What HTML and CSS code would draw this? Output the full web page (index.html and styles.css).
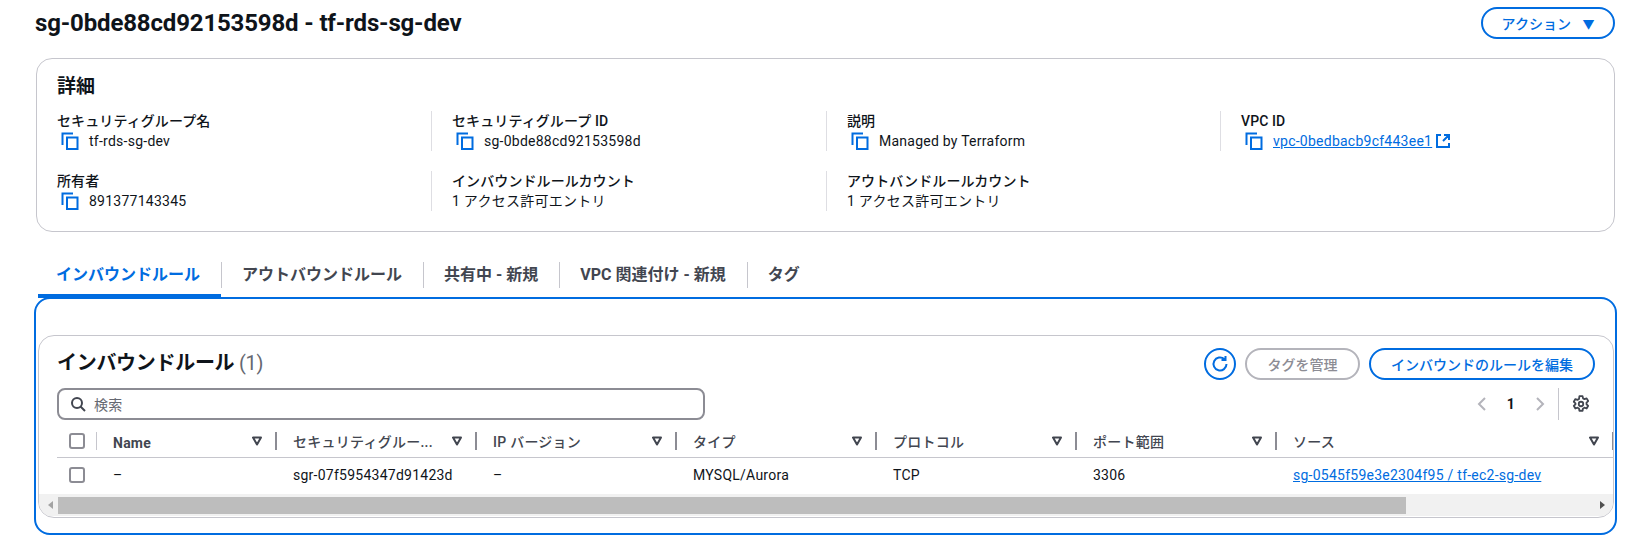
FILE: index.html
```html
<!DOCTYPE html>
<html lang="ja">
<head>
    <meta charset="UTF-8">
    <title>sg-0bde88cd92153598d - tf-rds-sg-dev</title>
    <link rel="stylesheet" href="styles.css">
</head>
<body>
    <svg class="defs" width="0" height="0">
        <symbol id="copy" viewBox="0 0 18 18">
            <path d="M1.5 13V1.5H12M6 5.5h10.5v11.5H6z" fill="none" stroke="currentColor" stroke-width="2"/>
        </symbol>
        <symbol id="sort" viewBox="0 0 10 10">
            <path d="M1 1.5h8L5 8.5z" fill="none" stroke="currentColor" stroke-width="2" stroke-linejoin="round"/>
        </symbol>
    </svg>

    <header class="page-head">
        <h1>sg-0bde88cd92153598d - tf-rds-sg-dev</h1>
        <button class="btn btn-action">アクション <span class="caret">▼</span></button>
    </header>

    <section class="details">
        <h2>詳細</h2>
        <div class="detail-grid">
            <div class="detail">
                <div class="label">セキュリティグループ名</div>
                <div class="value"><svg class="copy"><use href="#copy"/></svg>tf-rds-sg-dev</div>
            </div>
            <div class="detail">
                <div class="label">セキュリティグループ ID</div>
                <div class="value"><svg class="copy"><use href="#copy"/></svg>sg-0bde88cd92153598d</div>
            </div>
            <div class="detail">
                <div class="label">説明</div>
                <div class="value"><svg class="copy"><use href="#copy"/></svg>Managed by Terraform</div>
            </div>
            <div class="detail">
                <div class="label">VPC ID</div>
                <div class="value"><svg class="copy"><use href="#copy"/></svg><a href="#">vpc-0bedbacb9cf443ee1</a><svg class="ext" viewBox="0 0 16 16"><path d="M6 2H2v12h12v-4M9 2h5v5M14 2L8 8" fill="none" stroke="currentColor" stroke-width="2"/></svg></div>
            </div>
            <div class="detail">
                <div class="label">所有者</div>
                <div class="value"><svg class="copy"><use href="#copy"/></svg>891377143345</div>
            </div>
            <div class="detail">
                <div class="label">インバウンドルールカウント</div>
                <div class="value">1 アクセス許可エントリ</div>
            </div>
            <div class="detail">
                <div class="label">アウトバンドルールカウント</div>
                <div class="value">1 アクセス許可エントリ</div>
            </div>
        </div>
    </section>

    <nav class="tabs">
        <a class="tab active">インバウンドルール</a>
        <a class="tab">アウトバウンドルール</a>
        <a class="tab">共有中 - 新規</a>
        <a class="tab">VPC 関連付け - 新規</a>
        <a class="tab">タグ</a>
    </nav>

    <section class="panel">
        <div class="rules">
            <div class="rules-head">
                <h2>インバウンドルール <span class="count">(1)</span></h2>
                <div class="actions">
                    <button class="btn btn-icon"><svg width="18" height="18" viewBox="0 0 18 18"><path d="M15.5 9a6.5 6.5 0 1 1-2.2-4.9M14.5 1v4h-4" fill="none" stroke="currentColor" stroke-width="2"/></svg></button>
                    <button class="btn btn-disabled">タグを管理</button>
                    <button class="btn btn-edit">インバウンドのルールを編集</button>
                </div>
            </div>
            <div class="filter-row">
                <div class="search">
                    <svg width="16" height="16" viewBox="0 0 16 16"><circle cx="7" cy="7" r="5" fill="none" stroke="currentColor" stroke-width="2"/><path d="M10.5 10.5L15 15" stroke="currentColor" stroke-width="2"/></svg>
                    <span>検索</span>
                </div>
                <div class="pager">
                    <svg class="chev" viewBox="0 0 10 16"><path d="M8 2L2 8l6 6" fill="none" stroke="currentColor" stroke-width="2"/></svg>
                    <b>1</b>
                    <svg class="chev" viewBox="0 0 10 16"><path d="M2 2l6 6-6 6" fill="none" stroke="currentColor" stroke-width="2"/></svg>
                    <span class="pager-sep"></span>
                    <svg class="gear" viewBox="0 0 16 16"><path d="M6.6 1h2.8l.4 2 1.3.7 1.9-.7 1.4 2.4-1.5 1.4v1.4l1.5 1.4-1.4 2.4-1.9-.7-1.3.7-.4 2H6.6l-.4-2-1.3-.7-1.9.7-1.4-2.4 1.5-1.4V7.4L1.6 6l1.4-2.4 1.9.7 1.3-.7z" fill="none" stroke="currentColor" stroke-width="1.6" stroke-linejoin="round"/><circle cx="8" cy="8" r="2" fill="none" stroke="currentColor" stroke-width="1.6"/></svg>
                </div>
            </div>
            <div class="table">
                <div class="tr th">
                    <div class="cell check"><span class="box"></span></div>
                    <div class="cell"><span class="name">Name</span><svg class="sort"><use href="#sort"/></svg></div>
                    <div class="cell"><span>セキュリティグルー...</span><svg class="sort"><use href="#sort"/></svg></div>
                    <div class="cell"><span>IP バージョン</span><svg class="sort"><use href="#sort"/></svg></div>
                    <div class="cell"><span>タイプ</span><svg class="sort"><use href="#sort"/></svg></div>
                    <div class="cell"><span>プロトコル</span><svg class="sort"><use href="#sort"/></svg></div>
                    <div class="cell"><span>ポート範囲</span><svg class="sort"><use href="#sort"/></svg></div>
                    <div class="cell"><span>ソース</span><svg class="sort"><use href="#sort"/></svg></div>
                </div>
                <div class="tr td">
                    <div class="cell check"><span class="box"></span></div>
                    <div class="cell">–</div>
                    <div class="cell">sgr-07f5954347d91423d</div>
                    <div class="cell">–</div>
                    <div class="cell">MYSQL/Aurora</div>
                    <div class="cell">TCP</div>
                    <div class="cell">3306</div>
                    <div class="cell"><a href="#">sg-0545f59e3e2304f95 / tf-ec2-sg-dev</a></div>
                </div>
            </div>
            <div class="scrollbar">
                <span class="arrow arrow-left"></span>
                <div class="track"><div class="thumb"></div></div>
                <span class="arrow arrow-right"></span>
            </div>
        </div>
    </section>
</body>
</html>
```

FILE: styles.css
```css
body {
    margin: 0;
    padding: 7px 17px 0 35px;
    font-family: Roboto, "Noto Sans CJK JP", sans-serif;
    font-size: 14px;
    letter-spacing: 0.25px;
    color: #0f141a;
    background: #fff;
}
.defs {
    position: absolute;
}
h1, h2 {
    margin: 0;
    letter-spacing: 0;
}
a {
    color: #006ce0;
    text-decoration: underline;
}
.page-head {
    display: flex;
    justify-content: space-between;
    align-items: center;
    height: 31px;
    padding-right: 2px;
}
h1 {
    font-size: 24px;
    font-weight: 700;
    letter-spacing: -0.15px;
}
.btn {
    font-family: inherit;
    font-size: 14px;
    font-weight: 500;
    background: #fff;
    border: 2px solid #006ce0;
    border-radius: 20px;
    color: #006ce0;
    height: 32px;
    padding: 0 20px;
    box-sizing: border-box;
}
.btn-action {
    width: 134px;
    padding: 0;
}
.caret {
    margin-left: 8px;
    font-size: 12px;
}
.details {
    margin: 20px 2px 0 1px;
    height: 174px;
    box-sizing: border-box;
    border: 1px solid #c6c6cd;
    border-radius: 16px;
    padding: 17px 20px 0 20px;
}
.details h2 {
    font-size: 19px;
    line-height: 22px;
    font-weight: 700;
}
.detail-grid {
    display: grid;
    grid-template-columns: 374px 395px 394px 1fr;
    row-gap: 20px;
    margin-top: 13px;
}
.detail {
    height: 40px;
    line-height: 20px;
    border-left: 1px solid #dedee3;
    padding-left: 20px;
}
.detail:nth-child(4n+1) {
    border-left: none;
    padding-left: 0;
}
.label {
    font-weight: 500;
    letter-spacing: 0.1px;
}
.value {
    display: flex;
    align-items: center;
}
.copy {
    width: 18px;
    height: 18px;
    margin: 0 10px 0 4px;
    color: #006ce0;
}
.ext {
    width: 16px;
    height: 16px;
    margin-left: 3px;
    color: #006ce0;
}
.tabs {
    display: flex;
    margin-top: 22px;
    height: 44px;
    margin-left: 3px;
}
.tab {
    display: block;
    position: relative;
    padding: 0 21px;
    height: 44px;
    line-height: 42px;
    font-size: 16px;
    font-weight: 700;
    letter-spacing: 0;
    color: #424650;
    text-decoration: none;
}
.tab + .tab::before {
    content: "";
    position: absolute;
    left: 0;
    top: 8px;
    height: 26px;
    border-left: 1px solid #c6c6cd;
}
.tab.active {
    padding-left: 18px;
    color: #006ce0;
    border-bottom: 4px solid #006ce0;
    box-sizing: border-box;
}
.panel {
    height: 238px;
    box-sizing: border-box;
    margin: -1px 0 0 -1px;
    border: 2px solid #006ce0;
    border-radius: 16px;
    padding: 36px 1px 0 2px;
}
.rules {
    height: 183px;
    box-sizing: border-box;
    border: 1px solid #c6c6cd;
    border-radius: 16px;
    overflow: hidden;
}
.rules-head {
    display: flex;
    justify-content: space-between;
    align-items: center;
    height: 30px;
    margin-top: 13px;
    padding: 0 18px;
}
.rules-head h2 {
    font-size: 20px;
    font-weight: 700;
    letter-spacing: -0.3px;
    margin-bottom: 6px;
}
.count {
    font-weight: 400;
    color: #656871;
}
.actions {
    display: flex;
    gap: 9px;
}
.btn-icon {
    width: 32px;
    padding: 0;
    display: flex;
    align-items: center;
    justify-content: center;
}
.btn-disabled {
    width: 115px;
    padding: 0;
    color: #8c8c94;
    border-color: #b4b4bb;
}
.btn-edit {
    width: 226px;
    padding: 0;
}
.filter-row {
    display: flex;
    justify-content: space-between;
    margin-top: 9px;
    padding: 0 18px;
}
.search {
    display: flex;
    align-items: center;
    gap: 8px;
    width: 648px;
    height: 32px;
    box-sizing: border-box;
    border: 2px solid #8c8c94;
    border-radius: 8px;
    padding-left: 11px;
    color: #424650;
}
.search span {
    color: #656871;
}
.pager {
    display: flex;
    align-items: center;
    height: 32px;
}
.chev {
    width: 10px;
    height: 16px;
    color: #b4b4bb;
}
.pager b {
    width: 48px;
    text-align: center;
}
.pager-sep {
    height: 32px;
    border-left: 1px solid #c6c6cd;
    margin-left: 13px;
}
.gear {
    width: 18px;
    height: 18px;
    margin: 0 5px 0 13px;
    color: #424650;
}
.table {
    margin: 4px 0 0 18px;
}
.tr {
    display: grid;
    grid-template-columns: 40px 180px repeat(5, 200px) 337px;
}
.th {
    height: 33px;
    border-bottom: 1px solid #c6c6cd;
    align-items: center;
    color: #424650;
    font-weight: 500;
}
.th .cell {
    display: flex;
    justify-content: space-between;
    align-items: center;
    height: 18px;
    padding: 0 13px 0 16px;
    border-right: 2px solid #8c8c94;
}
.th .cell.check {
    border-right: 1px solid #c6c6cd;
    padding: 0 0 0 12px;
    justify-content: flex-start;
}
.name {
    font-weight: 700;
    margin-top: 4px;
}
.sort {
    width: 10px;
    height: 10px;
    color: #424650;
}
.td {
    height: 36px;
    padding-bottom: 2px;
    box-sizing: border-box;
    align-items: center;
}
.td .cell {
    padding-left: 16px;
}
.td .cell.check {
    padding-left: 12px;
    display: flex;
}
.box {
    display: block;
    box-sizing: border-box;
    width: 16px;
    height: 16px;
    border: 2px solid #8c8c94;
    border-radius: 3px;
}
.scrollbar {
    display: flex;
    align-items: center;
    height: 22px;
    background: #f1f1f1;
}
.arrow {
    width: 0;
    height: 0;
    border-top: 4px solid transparent;
    border-bottom: 4px solid transparent;
}
.arrow-left {
    margin-left: 9px;
    border-right: 5px solid #a3a3a3;
}
.arrow-right {
    margin-right: 8px;
    border-left: 5px solid #505050;
}
.track {
    flex: 1;
    padding: 0 5px;
}
.thumb {
    width: 1348px;
    height: 17px;
    background: #bdbdbd;
}
```
